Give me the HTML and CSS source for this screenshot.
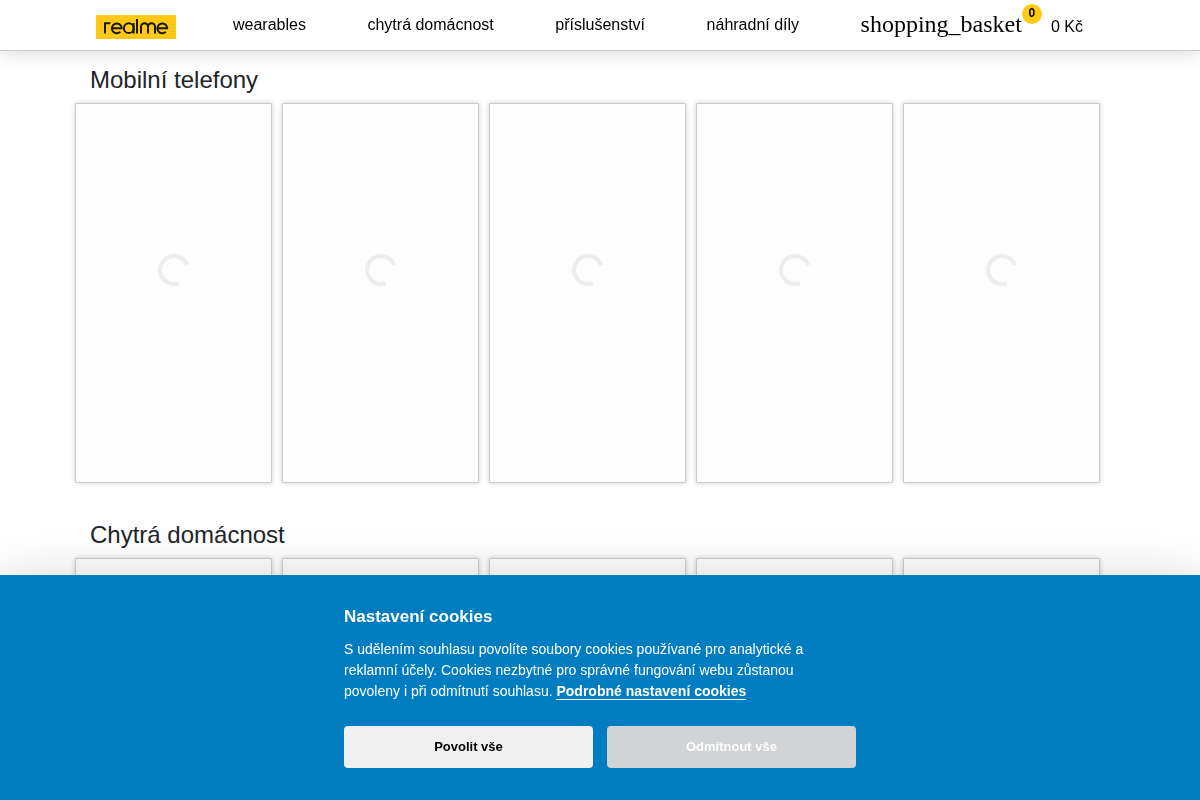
FILE: index.html
```html
<!DOCTYPE html>
<html lang="cs">
<head>
<meta charset="utf-8">
<meta name="viewport" content="width=device-width, initial-scale=1">
<title>realme</title>
<link rel="stylesheet" href="styles.css">
</head>
<body>
<svg class="defs" aria-hidden="true">
  <symbol id="spinner" viewBox="0 0 32 32">
    <path d="M29.200 11.200A14 14 0 1 0 20.800 29.200" fill="none" stroke="#ededed" stroke-width="4"/>
  </symbol>
</svg>

<header class="header">
  <div class="header-inner">
    <a class="logo" href="#" aria-label="realme">
      <svg width="80" height="24" viewBox="0 0 80 24" fill="none" stroke="#1a1a14" stroke-width="2">
        <rect width="80" height="24" fill="#ffc915" stroke="none"/>
        <path d="M9 18.600V8.300H14.300"/>
        <path d="M16 13.200H25.700A4.900 4.900 0 1 0 24.300 16.800"/>
        <circle cx="32.800" cy="13.200" r="4.900"/>
        <path d="M37.600 8V18.600M41 4V18.600"/>
        <path d="M45 18.600V11.800A3.500 3.500 0 0 1 52 11.800V18.600M52 11.800A3.500 3.500 0 0 1 59 11.800V18.600"/>
        <path d="M61.500 13.200H71.200A4.900 4.900 0 1 0 69.800 16.800"/>
      </svg>
    </a>
    <nav class="nav">
      <a href="#">wearables</a>
      <a href="#">chytrá domácnost</a>
      <a href="#">příslušenství</a>
      <a href="#">náhradní díly</a>
      <a class="basket" href="#">
        <span class="basket-icon">shopping_basket<span class="badge">0</span></span>
        <span class="total">0 Kč</span>
      </a>
    </nav>
  </div>
</header>

<main class="content">
  <section class="section">
    <h2>Mobilní telefony</h2>
    <div class="cards">
      <div class="card"><svg class="spinner"><use href="#spinner"/></svg></div>
      <div class="card"><svg class="spinner"><use href="#spinner"/></svg></div>
      <div class="card"><svg class="spinner"><use href="#spinner"/></svg></div>
      <div class="card"><svg class="spinner"><use href="#spinner"/></svg></div>
      <div class="card"><svg class="spinner"><use href="#spinner"/></svg></div>
    </div>
  </section>
  <section class="section">
    <h2>Chytrá domácnost</h2>
    <div class="cards">
      <div class="card"><svg class="spinner"><use href="#spinner"/></svg></div>
      <div class="card"><svg class="spinner"><use href="#spinner"/></svg></div>
      <div class="card"><svg class="spinner"><use href="#spinner"/></svg></div>
      <div class="card"><svg class="spinner"><use href="#spinner"/></svg></div>
      <div class="card"><svg class="spinner"><use href="#spinner"/></svg></div>
    </div>
  </section>
</main>

<div class="cookies" role="dialog" aria-labelledby="cookies-title">
  <div class="cookies-inner">
    <h3 id="cookies-title">Nastavení cookies</h3>
    <p>S udělením souhlasu povolíte soubory cookies používané pro analytické a reklamní účely. Cookies nezbytné pro správné fungování webu zůstanou povoleny i při odmítnutí souhlasu. <a href="#">Podrobné nastavení cookies</a></p>
    <div class="actions">
      <button class="accept" type="button">Povolit vše</button>
      <button class="reject" type="button">Odmítnout vše</button>
    </div>
  </div>
</div>
</body>
</html>
```

FILE: styles.css
```css
* {
  box-sizing: border-box;
}

html {
  scrollbar-width: none;
}

body {
  margin: 0;
  padding-top: 51px;
  background: #fff;
  color: #212529;
  font: 16px/24px "Liberation Sans", Arial, sans-serif;
}

.defs {
  position: absolute;
  width: 0;
  height: 0;
}

.header {
  position: fixed;
  inset: 0 0 auto;
  z-index: 10;
  background: #fff;
  border-bottom: 1px solid #ccc;
  box-shadow: 0 0 20px rgba(0, 0, 0, 0.18);
}

.header-inner {
  display: flex;
  align-items: center;
  gap: 57px;
  max-width: 1008px;
  height: 50px;
  margin: 0 auto;
  padding-right: 21px;
}

.logo {
  display: flex;
  padding-top: 4px;
}

.nav {
  display: flex;
  flex: 1;
  align-items: center;
  justify-content: space-between;
}

.nav a {
  color: #000;
  text-decoration: none;
}

.nav .basket {
  display: flex;
  align-items: center;
  gap: 29px;
}

.basket-icon {
  position: relative;
  padding-bottom: 2px;
  font: 24px/24px "Liberation Serif", "Times New Roman", serif;
}

.badge {
  position: absolute;
  top: -8px;
  left: 100%;
  width: 20px;
  height: 20px;
  border-radius: 50%;
  background: #ffc915;
  font: bold 12px/18px "Liberation Sans", Arial, sans-serif;
  text-align: center;
}

.total {
  padding-top: 4px;
}

.content {
  max-width: 1050px;
  margin: 0 auto;
  padding: 14px 25px 0 0;
}

.section {
  margin-bottom: 37px;
}

.section h2 {
  margin: 0 0 8px;
  padding-left: 15px;
  font-size: 24px;
  font-weight: 400;
  line-height: 30px;
}

.cards {
  display: grid;
  grid-template-columns: repeat(5, 1fr);
  gap: 10px;
}

.card {
  display: flex;
  justify-content: center;
  min-height: 380px;
  padding-top: 150px;
  background: #fdfdfd;
  border: 1px solid #ccc;
  border-radius: 1px;
  box-shadow: 0 0 5px rgba(0, 0, 0, 0.2);
}

.spinner {
  width: 32px;
  height: 32px;
}

.cookies {
  position: fixed;
  inset: auto 0 0;
  z-index: 20;
  padding: 29px 20px 32px;
  background: #007cc1;
  color: #fff;
  box-shadow: 0 10px 56px rgba(2, 2, 3, 0.2);
}

.cookies-inner {
  max-width: 512px;
  margin: 0 auto;
}

.cookies h3 {
  margin: 0 0 10px;
  font-size: 17px;
  line-height: 25px;
}

.cookies p {
  max-width: 480px;
  margin: 0 0 24px;
  font-size: 14px;
  line-height: 21px;
}

.cookies a {
  color: #fff;
  font-weight: 700;
  text-decoration: none;
  border-bottom: 1px solid #fff;
}

.actions {
  display: grid;
  grid-template-columns: 1fr 1fr;
  gap: 14px;
}

.actions button {
  height: 42px;
  border: 0;
  border-radius: 4px;
  font: bold 13px/20px "Liberation Sans", Arial, sans-serif;
}

.accept {
  background: #f0f0f0;
  color: #000;
}

.reject {
  background: #d1d3d5;
  color: #fff;
}
```
